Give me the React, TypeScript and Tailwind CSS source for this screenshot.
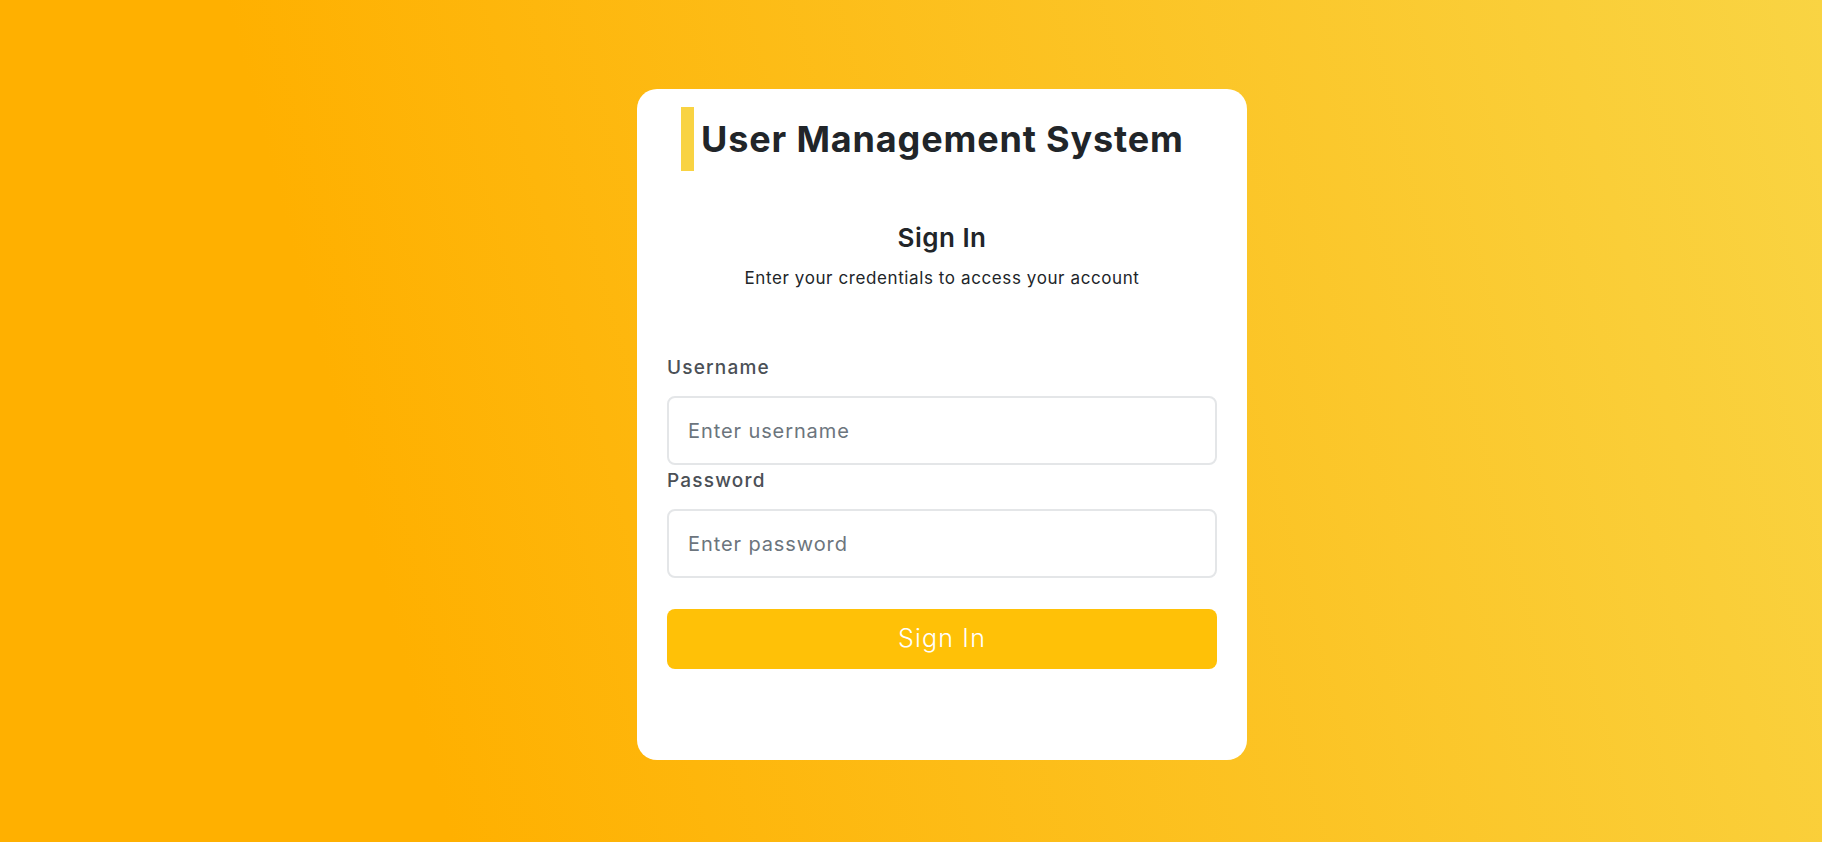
export default function App() {
  return (
    <div
      className="min-h-screen w-full bg-[linear-gradient(75deg,#ffb000_22%,#f9d443_100%)] flex justify-center pt-[89px] pl-[62px]"
      style={{ fontFamily: "Inter, 'Noto Sans', sans-serif" }}
    >
      <div className="w-[610px] h-[671px] bg-white rounded-[20px] pt-[18px] px-[30px] pb-[90px] flex flex-col">
        <div className="flex items-center gap-[7px] ml-[14px]">
          <div className="w-[13px] h-[64px] bg-[#f9d342]" />
          <h1 className="text-[36px] leading-[64px] font-bold text-[#212529] tracking-[0.85px]">
            User Management System
          </h1>
        </div>

        <h2 className="mt-[51px] text-center text-[26px] leading-[32px] font-semibold text-[#212529] tracking-[0.5px]">
          Sign In
        </h2>
        <p className="mt-[12px] text-center text-[17px] leading-[24px] text-[#212529] tracking-[0.6px]">
          Enter your credentials to access your account
        </p>

        <form className="flex flex-col" onSubmit={(e) => e.preventDefault()}>
          <label className="mt-[64px] text-[19px] leading-[27px] font-medium text-[#4b5056] tracking-[1.2px]">
            Username
          </label>
          <input
            type="text"
            placeholder="Enter username"
            className="mt-[15px] h-[69px] w-full rounded-[8px] border-2 border-[#e4e6e8] px-[19px] text-[20px] tracking-[0.9px] text-[#212529] placeholder:text-[#6c757d] outline-none"
          />

          <label className="mt-[2px] text-[19px] leading-[27px] font-medium text-[#4b5056] tracking-[1.2px]">
            Password
          </label>
          <input
            type="password"
            placeholder="Enter password"
            className="mt-[15px] h-[69px] w-full rounded-[8px] border-2 border-[#e4e6e8] px-[19px] text-[20px] tracking-[0.9px] text-[#212529] placeholder:text-[#6c757d] outline-none"
          />

          <button
            type="submit"
            className="mt-[31px] h-[60px] w-full rounded-[8px] bg-[#ffc107] text-white text-[25px] font-light tracking-[1.2px]"
          >
            Sign In
          </button>
        </form>
      </div>
    </div>
  )
}
